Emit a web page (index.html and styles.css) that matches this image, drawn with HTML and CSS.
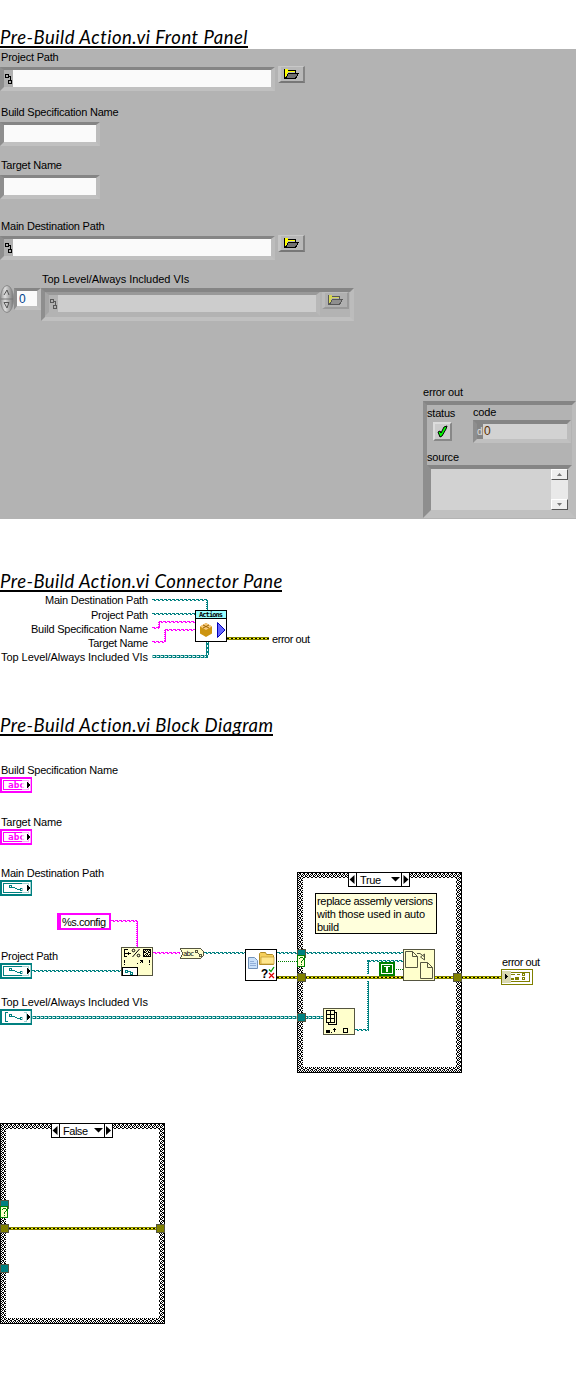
FILE: index.html
```html
<!DOCTYPE html>
<html lang="en">
<head>
<meta charset="utf-8">
<title>Pre-Build Action.vi</title>
<link rel="stylesheet" href="styles.css">
</head>
<body>
<svg class="defs" width="0" height="0" aria-hidden="true">
  <symbol id="path-glyph" viewBox="0 0 7 11"><path d="M.5 1.500h3v3h-3zM3.500 7.500h3v3h-3zM4 3.500h1.500V7" fill="none" stroke="#000"/></symbol>
  <symbol id="folder" viewBox="0 0 16 10"><path d="M1 9V1h2v1h8v2" fill="none" stroke="#000" stroke-width="1"/><path d="M1 0h3v1h7v2H4v1H3v4H1z" fill="#ff0"/><path d="M.5 0v9.500M4 1.500h7.500V4" fill="none" stroke="#000"/><path d="M1.500 9.500 4.500 4.500h10L11.500 9.500z" fill="#707070" stroke="#000"/></symbol>
</svg>
<main class="page">
  <h1 class="title title-panel"><span class="title-text">Pre-Build Action.vi Front Panel</span></h1>
  <section class="panel">
    <div class="inputs">
      <div class="group group-project">
        <span class="label">Project Path</span>
        <div class="row">
          <div class="well path"><svg class="pglyph"><use href="#path-glyph"/></svg><div class="value"></div></div>
          <div class="browse"><svg class="ficon"><use href="#folder"/></svg></div>
        </div>
      </div>
      <div class="group group-build"><span class="label">Build Specification Name</span><div class="well text"></div></div>
      <div class="group group-target"><span class="label">Target Name</span><div class="well text"></div></div>
      <div class="group group-main">
        <span class="label">Main Destination Path</span>
        <div class="row">
          <div class="well path"><svg class="pglyph"><use href="#path-glyph"/></svg><div class="value"></div></div>
          <div class="browse"><svg class="ficon"><use href="#folder"/></svg></div>
        </div>
      </div>
      <div class="array">
        <div class="index">
          <svg class="spin" viewBox="0 0 14 28"><defs><linearGradient id="metal"><stop offset="0" stop-color="#999"/><stop offset=".35" stop-color="#ddd"/><stop offset="1" stop-color="#777"/></linearGradient></defs><ellipse cx="7" cy="14" rx="6.500" ry="13.500" fill="url(#metal)" stroke="#888"/><path d="M1 14h12" stroke="#777"/><path d="M4 10 7 5l2 5M4 17.500h5L7 23z" fill="none" stroke="#555"/></svg>
          <div class="well number">0</div>
        </div>
        <div class="array-body">
          <span class="label array-label">Top Level/Always Included VIs</span>
          <div class="well frame">
            <div class="row dim">
              <div class="well path"><svg class="pglyph"><use href="#path-glyph"/></svg><div class="value"></div></div>
              <div class="browse"><svg class="ficon"><use href="#folder"/></svg></div>
            </div>
          </div>
        </div>
      </div>
    </div>
    <div class="error">
      <span class="label">error out</span>
      <div class="well cluster">
        <div class="cluster-top">
          <div class="status"><span class="label">status</span><div class="led"><svg viewBox="0 0 13 13" width="13" height="13"><path d="M2 7 4 6 5 8 8 2l3-1-1 3-4 7-2 1z" fill="#0f0" stroke="#000"/></svg></div></div>
          <div class="code"><span class="label">code</span><div class="well numeric"><span class="radix">d</span><span class="digits">0</span></div></div>
        </div>
        <span class="label">source</span>
        <div class="well source"><div class="scroll"><span class="sbtn"><svg width="5" height="3"><path d="M0 3 2.500 0 5 3z" fill="#777"/></svg></span><span class="sbtn"><svg width="5" height="3"><path d="M0 0 2.500 3 5 0z" fill="#777"/></svg></span></div></div>
      </div>
    </div>
  </section>

  <h1 class="title title-pane"><span class="title-text">Pre-Build Action.vi Connector Pane</span></h1>
  <svg class="diagram" width="576" height="124" viewBox="0 592 576 124">
    <g class="t">
      <text x="45" y="604" textLength="103">Main Destination Path</text>
      <text x="91" y="619" textLength="57">Project Path</text>
      <text x="31" y="633" textLength="117">Build Specification Name</text>
      <text x="88" y="647" textLength="60">Target Name</text>
      <text x="1" y="661" textLength="147">Top Level/Always Included VIs</text>
      <text x="272" y="643" textLength="38">error out</text>
    </g>
    <g class="px">
      <path class="tw" d="M152 599.500H207"/><path class="tw2" d="M152 600.500H207"/><path class="tv" d="M207.500 600V610"/><path class="tv2" d="M206.500 600V610"/>
      <path class="tw" d="M152 613.500H195"/><path class="tw2" d="M152 614.500H195"/>
      <path class="mw" d="M152 627.500H159M159 621.500H195"/><path class="mw2" d="M152 628.500H159M159 622.500H195"/><path class="mv" d="M159.500 622V628"/><path class="mv2" d="M158.500 622V628"/>
      <path class="mw" d="M152 641.500H165M165 629.500H195"/><path class="mw2" d="M152 642.500H165M165 630.500H195"/><path class="mv" d="M165.500 630V642"/><path class="mv2" d="M164.500 630V642"/>
      <path class="aw" d="M152 656.500H208M207.500 655V642"/><path class="aw2" d="M153 656.500H206M207.500 655V642"/><path class="aw4" d="M152 656.500H206"/>
      <path class="ew" d="M227 638.500H269"/><path class="ew2" d="M227 638.500H269"/><path class="ew3" d="M227 638.500H269"/>
      <rect x="195.500" y="610.500" width="31" height="31" fill="#fff" stroke="#000"/><path d="M196 611h30v8h-30z" fill="#9ff"/><path d="M196 618.500h30" stroke="#000"/>
    </g>
    <text class="act" x="199" y="617" textLength="24">Actions</text>
    <path d="M200 626.500 206 623 212 626.500V633.500L206 637 200 633.500z" fill="#cc9410"/><path d="M200 626.500 206 623 212 626.500 206 630z" fill="#f8c87c"/><path d="M203 625 209 628M209 625 203 628" stroke="#9a6500"/>
    <path d="M217.500 622.500V637.500L225 630z" fill="#6666ff" stroke="#0000b8"/>
  </svg>

  <h1 class="title title-block"><span class="title-text">Pre-Build Action.vi Block Diagram</span></h1>
  <svg class="diagram" width="576" height="638" viewBox="0 736 576 638">
    <defs>
      <pattern id="hatch" width="4" height="4" patternUnits="userSpaceOnUse"><path d="M0 0h2v1H0zM2 1h2v1H2zM1 2h1v1H1zM3 2h1v1H3zM0 3h1v1H0zM2 3h1v1H2z" fill="#000"/></pattern>
      <g id="term"><path d="M0 0h32v16H0z"/><path d="M2 2h28v12H2z" fill="#fff"/><path d="M3.500 3.500h25v9h-25z" fill="none" stroke="currentColor"/></g>
      <g id="shade"><path d="M22 2h9v12h-9z" fill="#fff" opacity=".65"/><path d="M27 5h1v1h1v1h1v2h-1v1h-1v1h-1z" fill="#000"/></g>
      <g id="pth"><path d="M9.500 5.500h2v2h-2zM20.500 8.500h2v2h-2zM12 7.500h3M15 8.500h2M17 9.500h3" fill="none" stroke="#008080"/></g>
    </defs>
    <g class="t">
      <text x="1" y="774" textLength="117">Build Specification Name</text>
      <text x="1" y="826" textLength="61">Target Name</text>
      <text x="1" y="877" textLength="103">Main Destination Path</text>
      <text x="1" y="960" textLength="57">Project Path</text>
      <text x="1" y="1006" textLength="147">Top Level/Always Included VIs</text>
      <text x="502" y="966" textLength="38">error out</text>
    </g>
    <g class="px">
      <g transform="translate(0 777)" class="mag"><use href="#term"/><text class="abc" x="8" y="11" textLength="17" lengthAdjust="spacingAndGlyphs">abc</text><use href="#shade"/></g>
      <g transform="translate(0 829)" class="mag"><use href="#term"/><text class="abc" x="8" y="11" textLength="17" lengthAdjust="spacingAndGlyphs">abc</text><use href="#shade"/></g>
      <g transform="translate(0 880)" class="teal"><use href="#term"/><use href="#pth"/><use href="#shade"/></g>
      <g transform="translate(0 963)" class="teal"><use href="#term"/><use href="#pth"/><use href="#shade"/></g>
      <g transform="translate(0 1009)" class="teal"><path d="M0 0h32v16H0z"/><path d="M2 2h28v12H2z" fill="#fff"/><path d="M8 3.500H5.500V12.500H8M24 3.500h2.500v9H24" fill="none" stroke="#008080"/><use href="#pth"/><use href="#shade"/></g>

      <path class="mw" d="M111 920.500H137"/><path class="mw2" d="M111 921.500H137"/><path class="mv" d="M137.500 921V947"/><path class="mv2" d="M136.500 921V947"/>
      <path class="mw" d="M153 952.500H180"/><path class="mw2" d="M153 953.500H180"/>
      <path class="tw" d="M32 970.500H121M204 952.500H245M277 952.500H403M367 960.500H403M355 1029.500H367"/>
      <path class="tw2" d="M32 971.500H121M204 953.500H245M277 953.500H403M367 961.500H403M355 1030.500H367"/>
      <path class="tv" d="M368.500 961V974M368.500 981V1031"/><path class="tv2" d="M367.500 961V974M367.500 981V1031"/>
      <path class="aw" d="M32 1017.500H323"/><path class="aw2" d="M33 1017.500H323"/><path class="aw4" d="M32 1017.500H323"/>
    </g>

    <g class="px">
      <rect x="57" y="913" width="54" height="17" fill="#f0f"/><rect x="61" y="915" width="48" height="13" fill="#fff"/>
      <rect x="121.500" y="947.500" width="31" height="28" fill="#ffffcc" stroke="#555540"/>
      <path d="M122 967h15v8h-15z" fill="#fff" stroke="#000" transform="translate(.5 .5)"/>
      <path d="M125.500 970.500h2v2h-2zM130.500 972.500h2v2h-2zM128 971.500h3" fill="none" stroke="#008080"/>
      <path d="M124 949h1v8h-1zM125 949h3v1h-3zM125 953h3v1h-3zM125 956h2v1h-2zM128 952h1v3h-1zM129 953h2v1h-2zM124 960h1v3h-1zM124 964h1v1h-1zM149 960h1v3h-1zM149 964h1v1h-1zM140 960h3v3h-1v-1h-1v1h-1v-1h1v-1h-1zM137 963h1v1h-1z"/>
      <rect x="143" y="949" width="8" height="8" fill="url(#hatch)"/><path d="M143.500 949.500h7v7h-7z" fill="none" stroke="#000"/>
      <path d="M180.500 948.500h20l3 3v4l-3 3h-20l2-5z" fill="#ffffcc" stroke="#555540"/>
      <path d="M195.500 950.500h2v2h-2zM199.500 954.500h2v2h-2zM198 953.500h1" fill="none" stroke="#555540"/>
    </g>
    <text class="lab" x="62" y="926" textLength="44">%s.config</text>
    <g fill="none" stroke="#000"><circle cx="133.500" cy="950.500" r="1.300"/><circle cx="138.500" cy="955.500" r="1.300"/><path d="M139.500 949 132.500 957"/></g>
    <text class="tiny" x="183" y="956" textLength="11">abc</text>

    <g class="px">
      <g transform="translate(297 872)"><path fill-rule="evenodd" d="M0 0h165v201H0zM6 6v189h153V6z" fill="url(#hatch)"/><path d="M.5.5h164v200H.5z" fill="none" stroke="#000"/></g>
      <path class="gd" d="M278 961.500H298M396 969.500H403"/>
      <path class="ew" d="M277 977.500H501"/><path class="ew2" d="M277 977.500H501"/><path class="ew3" d="M277 977.500H501"/>
      <g class="tun"><path fill="#008080" d="M297.500 949.500h8v8h-8zM297.500 1013.500h8v8h-8z"/><path fill="#808000" d="M297.500 973.500h8v8h-8zM453.500 973.500h8v8h-8z"/></g>
      <path d="M297.500 955.500h7v11h-7z" fill="#ffffcc" stroke="#008000"/>
      <path d="M299 958h1v1h-1zM300 957h3v1h-3zM303 958h1v2h-1zM302 960h1v1h-1zM301 961h1v2h-1zM301 964h1v1h-1z" fill="#008000"/>
      <path d="M348.500 872.500h61v14h-61zM356.500 872v15M401.500 872v15" fill="#fff" stroke="#000"/>
      <rect x="245.500" y="949.500" width="31" height="31" fill="#fff" stroke="#000"/>
      <rect x="403.500" y="949.500" width="31" height="31" fill="#ffffcc" stroke="#555540"/>
      <rect x="323.500" y="1008.500" width="31" height="26" fill="#ffffcc" stroke="#555540"/>
      <rect x="315.500" y="893.500" width="121" height="40" fill="#ffffdc" stroke="#000"/>
      <path d="M379 962h16v14h-16z" fill="#008000"/><path d="M381.500 964.500h11v9h-11z" fill="none" stroke="#fff"/><path d="M384 966h6v1h-2v5h-2v-5h-2z" fill="#fff"/>
      <path d="M326.500 1010.500h8v12h-8zM330.500 1010v12M326 1014.500h9M326 1018.500h9M335 1012.500h1.500v12h-8v-2" fill="none" stroke="#000"/>
      <path d="M326 1030h4v3h-4zM331 1032h1v1h-1zM333 1029h3v1h-1v2h-1v-2h-1zM334 1028h1v1h-1z"/><path d="M343.500 1028.500h4v4h-4z" fill="none" stroke="#000"/>
      <path d="M501 969h32v16h-32z" fill="#808000"/><path d="M502 970h30v14h-30z" fill="#fff"/><path d="M504.500 972.500h25v9h-25z" fill="none" stroke="#808000"/>
      <path d="M502 971h9v12h-9z" fill="#d8d8b0"/><path d="M505 974h1v1h1v1h1v1h-1v1h-1v1h-1z"/>
      <path d="M511 974h4v1h-4zM517 974h3v1h-3zM515 977h4v3h-4zM511 978h3v2h-3z" fill="#808000"/><path d="M522.500 973.500h2v2h-2zM522.500 977.500h2v2h-2z" fill="none" stroke="#808000"/>
    </g>
    <path d="M354.500 875v9l-5-4.500zM403.500 875v9l5-4.500zM391 877h9l-4.500 4.500z"/>
    <text class="lab" x="360" y="884" textLength="21">True</text>
    <g class="t"><text x="317" y="905" textLength="116">replace assemly versions</text><text x="317" y="918" textLength="108">with those used in auto</text><text x="317" y="931" textLength="22">build</text></g>
    <path d="M248.500 957.500h6l3 3v8h-9z" fill="#c9e0fa" stroke="#7090b8"/><path d="M250 961.500h4M250 963.500h6M250 965.500h6" stroke="#7898c8" stroke-width=".7"/>
    <path d="M259.500 964.500v-11l1-1h5l1 2h6l1 1v9z" fill="#f5cf5c" stroke="#b08a24"/><path d="M261 964v-7h13v7z" fill="#ffe68c" stroke="#c09a30" stroke-width=".7"/>
    <text class="q" x="261" y="978">?</text><path d="M269 969.500 271 971.500 274 967" fill="none" stroke="#090" stroke-width="1.300"/><path d="M269 973 274 978M274 973 269 978" stroke="#d00" stroke-width="1.200"/>
    <g fill="#ffffcc" stroke="#555540"><path d="M405.500 951.500h7l5 5v11h-12zM412.500 951.500v5h5M420.500 962.500h7l5 5v11h-12zM427.500 962.500v5h5"/><path d="M417 953.500h3l4 3M424.500 954v6l-4-3z" fill="none"/></g>

    <g class="px">
      <g transform="translate(0 1123)"><path fill-rule="evenodd" d="M0 0h165v201H0zM6 6v189h153V6z" fill="url(#hatch)"/><path d="M.5.5h164v200H.5z" fill="none" stroke="#000"/></g>
      <path d="M51.500 1123.500h61v14h-61zM59.500 1123v15M104.500 1123v15" fill="#fff" stroke="#000"/>
      <path class="ew" d="M9 1228.500H156"/><path class="ew2" d="M9 1228.500H156"/><path class="ew3" d="M9 1228.500H156"/>
      <g class="tun"><path fill="#008080" d="M.5 1200.500h8v8h-8zM.5 1264.500h8v8h-8z"/><path fill="#808000" d="M.5 1224.500h8v8h-8zM156.500 1224.500h8v8h-8z"/></g>
      <path d="M.5 1206.500h7v11h-7z" fill="#ffffcc" stroke="#008000"/>
      <path d="M2 1209h1v1h-1zM3 1208h3v1h-3zM6 1209h1v2h-1zM5 1211h1v1h-1zM4 1212h1v2h-1zM4 1215h1v1h-1z" fill="#008000"/>
    </g>
    <path d="M57.500 1126v9l-5-4.500zM106 1126v9l5-4.500zM94 1128h9l-4.500 4.500z"/>
    <text class="lab" x="63" y="1135" textLength="25">False</text>
  </svg>
</main>
</body>
</html>
```
FILE: styles.css
```css
* { box-sizing: border-box; }
body { margin: 0; background: #fff; color: #000; font: 11px/14px "Liberation Sans", Arial, sans-serif; }
.defs { position: absolute; }
.page { width: 576px; height: 1374px; overflow: hidden; display: flex; flex-direction: column; align-items: flex-start; }

.title { margin: 0; height: 23px; flex: none; overflow: hidden; border-bottom: 2px solid #000; font: italic 400 18.500px/25px Lato, sans-serif; letter-spacing: .5px; white-space: nowrap; }
.title-text { display: block; }
.title-panel { margin-top: 25px; width: 248px; }
.title-pane { margin-top: 50px; width: 282px; letter-spacing: .46px; }
.title-block { width: 273px; margin-top: -3px; }

.panel { width: 576px; height: 470px; flex: none; margin-top: 1px; background: #b3b3b3; display: flex; justify-content: space-between; }
.inputs { padding-top: 1px; }
.error { width: 153px; padding-top: 336px; }
.error > .label { margin-bottom: 2px; }
.label { display: block; height: 14px; padding-left: 1px; letter-spacing: -.2px; white-space: nowrap; }
.error .label { padding-left: 0; }
.array-label { letter-spacing: -.05px; }
.group { display: flex; flex-direction: column; }
.group-project { height: 55px; }
.group-build { height: 53px; }
.group-target { height: 61px; }
.group-main { height: 53px; }
.group-project .row, .group-main .row { margin-top: 2px; }
.group > .well { margin-top: 3px; }

.row { display: flex; gap: 3px; align-items: flex-start; }
.well { border: solid; border-width: 4px; border-color: #858585 #bcbcbc #c0c0c0 #8e8e8e; }
.path { width: 275px; height: 24px; margin-top: 1px; border-top-width: 3px; display: flex; background: #b0b0b0; }
.pglyph { width: 7px; height: 11px; margin: 3px 1px 0; flex: none; shape-rendering: crispEdges; }
.value { flex: 1; background: #fafafa; }
.text { width: 100px; height: 24px; border-top-width: 3px; background: #fafafa; }
.browse { width: 27px; height: 17px; border: solid; border-width: 1px 2px 2px 3px; border-color: #c8c8c8 #858585 #777 #c5c5c5; background: #b8b8b8; display: flex; justify-content: center; padding-top: 2px; }
.ficon { width: 16px; height: 10px; shape-rendering: crispEdges; }

.array { display: flex; }
.index { width: 41px; display: flex; align-items: flex-start; padding-top: 13px; }
.spin { width: 14px; height: 28px; flex: none; }
.number { width: 27px; height: 22px; margin-top: 3px; border-width: 3px 4px 4px 3px; background: #fafafa; color: #00428c; font-size: 12px; line-height: 16px; padding-left: 2px; }
.frame { width: 313px; height: 33px; margin-top: 2px; }
.dim { gap: 2px; }
.dim .path { margin-top: 0; border-color: #999 #b8b8b8 #b3b3b3 #a5a5a5; background: #b3b3b3; }
.dim .value { background: #cdcdcd; }
.dim .pglyph, .dim .ficon { opacity: .5; }
.dim .browse { border-color: #bbb #999 #999 #bbb; background: #b0b0b0; }

.cluster { width: 153px; height: 117px; padding-top: 1px; }
.cluster-top { display: flex; height: 44px; gap: 20px; }
.status { width: 26px; }
.led { width: 19px; height: 19px; margin: 2px 0 0 6px; padding: 1px; border: 2px solid; border-color: #ddd #888 #888 #ddd; background: #ccc; }
.led svg { display: block; }
.code .label { margin-top: -1px; }
.numeric { width: 98px; height: 23px; margin-top: 1px; background: #d2d2d2; display: flex; line-height: 15px; }
.radix { width: 6px; background: #858585; color: #ddd; font-size: 10px; }
.digits { padding-left: 1px; font-size: 12px; color: #5a3000; }
.source { width: 145px; height: 49px; margin-top: 1px; background: #d2d2d2; display: flex; justify-content: flex-end; }
.scroll { width: 17px; background: #e9e9e9; display: flex; flex-direction: column; justify-content: space-between; }
.sbtn { height: 11px; border: 1px solid; border-color: #fff #555 #555 #fff; background: #eee; display: flex; align-items: center; justify-content: center; }

.diagram { display: block; flex: none; }
.t text, .lab { font: 11px "Liberation Sans", Arial, sans-serif; }
.px { shape-rendering: crispEdges; }
.px path { stroke-width: 1; }
.tw, .tw2, .tv, .tv2 { fill: none; stroke: #008080; }
.mw, .mw2, .mv, .mv2 { fill: none; stroke: #f0f; }
.tw, .mw { stroke-dasharray: 3 1; }
.tw2, .mw2 { stroke-dasharray: 2 2; stroke-dashoffset: -2; }
.tv2, .mv2 { stroke-dasharray: 1 1; }
.px .aw { fill: none; stroke: #008080; stroke-width: 3; }
.aw2 { fill: none; stroke: #fff; stroke-dasharray: 2 2; }
/* notches between the links of an array wire */
.px .aw4 { fill: none; stroke: #fff; stroke-width: 3; stroke-dasharray: 1 3; }
.px .aw4 { stroke-opacity: .55; }
.px .ew { fill: none; stroke: #808000; stroke-width: 3; }
.ew2 { fill: none; stroke: #ff0; }
.ew3 { fill: none; stroke: #000; stroke-dasharray: 2 2; }
.gd { fill: none; stroke: #008000; stroke-dasharray: 1 1; }
.tun { stroke: #555540; }
.mag { fill: #f0f; color: #f0f; }
.teal { fill: #008080; color: #008080; }
.abc { font: bold 8.500px "DejaVu Sans Mono", monospace; }
.act { font: bold 7px "DejaVu Sans Mono", monospace; }
.tiny { font: 7px "DejaVu Sans", sans-serif; }
.q { font: bold 12px "Liberation Mono", monospace; }
```
